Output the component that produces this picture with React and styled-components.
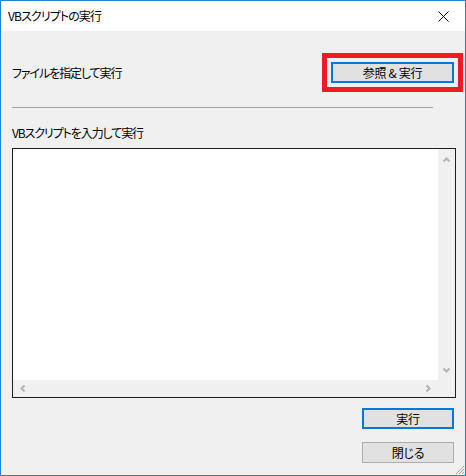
import React from "react";
import styled, { createGlobalStyle } from "styled-components";

const GlobalStyle = createGlobalStyle`
  html, body {
    margin: 0;
    padding: 0;
    background: #ffffff;
  }
  * {
    box-sizing: border-box;
  }
`;

const Window = styled.div`
  position: relative;
  width: 466px;
  height: 476px;
  border: 1px solid #1a83d7;
  background: #f0f0f0;
  display: flex;
  flex-direction: column;
  font-family: "Noto Sans CJK JP", "Noto Sans", sans-serif;
  font-feature-settings: "palt";
  font-size: 12px;
  color: #000000;
  overflow: hidden;
`;

const TitleBar = styled.div`
  height: 30px;
  background: #ffffff;
  display: flex;
  align-items: center;
  justify-content: space-between;
  padding-left: 7px;
  flex-shrink: 0;
`;

const Title = styled.span`
  font-size: 12px;
  line-height: 16px;
  letter-spacing: -0.9px;
`;

const CloseButton = styled.div`
  width: 46px;
  height: 30px;
  display: flex;
  align-items: center;
  justify-content: center;
  margin-right: -1px;
`;

const Body = styled.div`
  flex: 1;
  display: flex;
  flex-direction: column;
  padding: 0 0 0 11px;
`;

const FileRow = styled.div`
  display: flex;
  align-items: center;
  justify-content: space-between;
  margin-top: 22px;
  padding-right: 2px;
`;

const Label = styled.span`
  font-size: 12px;
  line-height: 16px;
  letter-spacing: -1.1px;
  margin-top: ${(p) => p.$top || 0}px;
`;

const Highlight = styled.div`
  border: 5px solid #ed1c24;
  padding: 4px;
`;

const Button = styled.div`
  width: ${(p) => p.$w}px;
  height: 21px;
  background: #e1e1e1;
  border: ${(p) => (p.$focus ? "2px solid #0078d7" : "1px solid #adadad")};
  display: flex;
  align-items: center;
  justify-content: center;
  font-size: 12px;
  line-height: 16px;
  letter-spacing: -0.3px;
`;

const Separator = styled.div`
  width: 421px;
  height: 1px;
  background: #a0a0a0;
  margin-top: 15px;
`;

const ScriptBox = styled.div`
  width: 444px;
  height: 250px;
  margin-top: 7px;
  border: 1px solid #1e1e1e;
  display: grid;
  grid-template-columns: 1fr 17px;
  grid-template-rows: 1fr 17px;
  background: #f0f0f0;
`;

const TextArea = styled.div`
  background: #ffffff;
`;

const VScroll = styled.div`
  background: #f0f0f0;
  display: flex;
  flex-direction: column;
  justify-content: space-between;
  align-items: center;
  padding: 7px 0 6px;
`;

const HScroll = styled.div`
  background: #f0f0f0;
  display: flex;
  justify-content: space-between;
  align-items: center;
  padding: 0 6px 0 6px;
`;

const Corner = styled.div`
  background: #f0f0f0;
`;

const ButtonColumn = styled.div`
  display: flex;
  flex-direction: column;
  align-items: flex-end;
  gap: 13px;
  margin-top: 10px;
  padding-right: 11px;
`;

const Grip = styled.svg`
  position: absolute;
  right: 0;
  bottom: 0;
`;

const Chevron = ({ dir }) => {
  const paths = {
    up: "M1.5 5.5 L4.5 2.5 L7.5 5.5",
    down: "M1.5 2.5 L4.5 5.5 L7.5 2.5",
    left: "M5.5 1.5 L2.5 4.5 L5.5 7.5",
    right: "M2.5 1.5 L5.5 4.5 L2.5 7.5",
  };
  const vertical = dir === "up" || dir === "down";
  return (
    <svg width={vertical ? 9 : 8} height={vertical ? 8 : 9}>
      <path d={paths[dir]} fill="none" stroke="#b4b4b4" strokeWidth="2" />
    </svg>
  );
};

export default function App() {
  return (
    <>
      <GlobalStyle />
      <Window>
        <TitleBar>
          <Title>VBスクリプトの実行</Title>
          <CloseButton>
            <svg width="11" height="11" viewBox="0 0 11 11">
              <path d="M0.5 0.5 L10.5 10.5 M10.5 0.5 L0.5 10.5" stroke="#000" strokeWidth="1" />
            </svg>
          </CloseButton>
        </TitleBar>
        <Body>
          <FileRow>
            <Label>ファイルを指定して実行</Label>
            <Highlight>
              <Button $w={123} $focus>参照 &amp; 実行</Button>
            </Highlight>
          </FileRow>
          <Separator />
          <Label $top={17}>VBスクリプトを入力して実行</Label>
          <ScriptBox>
            <TextArea />
            <VScroll>
              <Chevron dir="up" />
              <Chevron dir="down" />
            </VScroll>
            <HScroll>
              <Chevron dir="left" />
              <Chevron dir="right" />
            </HScroll>
            <Corner />
          </ScriptBox>
          <ButtonColumn>
            <Button $w={92} $focus>実行</Button>
            <Button $w={92}>閉じる</Button>
          </ButtonColumn>
        </Body>
        <Grip width="12" height="12" viewBox="0 0 12 12">
          <path d="M11 3 L3 11 M11 6 L6 11 M11 9 L9 11" stroke="#a0a0a0" strokeWidth="1" />
        </Grip>
      </Window>
    </>
  );
}
